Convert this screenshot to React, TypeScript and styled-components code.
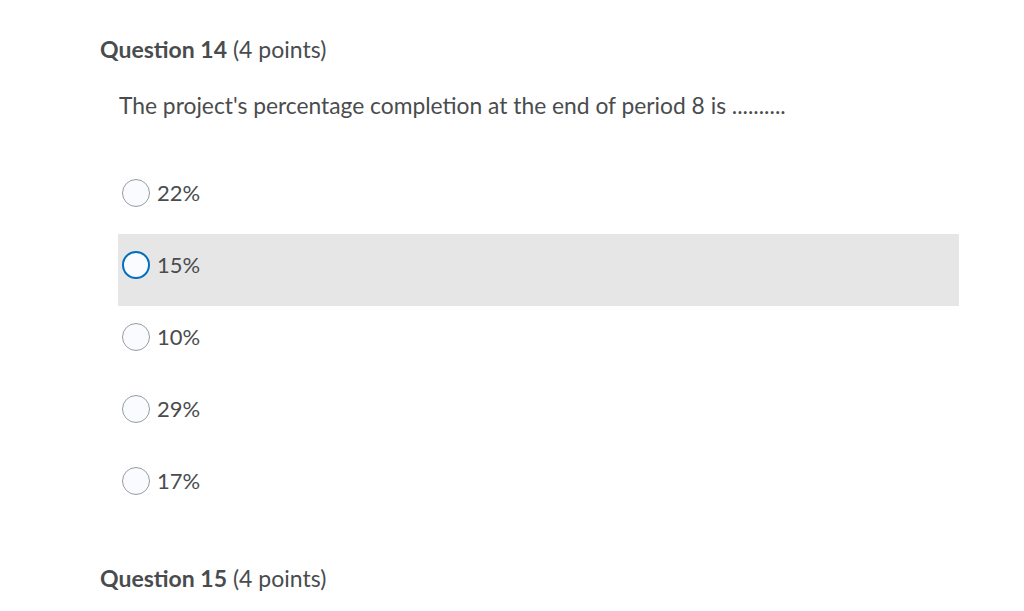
import React from "react";
import styled, { createGlobalStyle } from "styled-components";

const Global = createGlobalStyle`
  html, body { margin: 0; padding: 0; background: #ffffff; }
  body { font-family: Lato, "Open Sans", sans-serif; color: #494c4e; }
`;

const Page = styled.div`
  padding: 34px 0 0 100px;
  width: 1024px;
  height: 611px;
  box-sizing: border-box;
  overflow: hidden;
`;

const Heading = styled.h2`
  margin: 0;
  font-size: 23px;
  line-height: 30px;
  font-weight: 400;
  color: #494c4e;
  b { font-weight: 700; }
`;

const Body = styled.div`
  padding-left: 18px;
  width: 841px;
`;

const Prompt = styled.p`
  margin: 26px 0 0 1px;
  font-size: 22.8px;
  line-height: 30px;
`;

const Options = styled.div`
  display: flex;
  flex-direction: column;
  margin-top: 42px;
  margin-bottom: 41px;
`;

const Row = styled.label<{ $active?: boolean }>`
  display: flex;
  align-items: flex-start;
  gap: 7px;
  height: 72px;
  box-sizing: border-box;
  padding: 17px 0 0 4px;
  background: ${(p) => (p.$active ? "#e6e6e6" : "transparent")};
`;

const Radio = styled.span<{ $active?: boolean }>`
  width: 28px;
  height: 28px;
  box-sizing: border-box;
  border-radius: 50%;
  background: #f9fbff;
  border: ${(p) => (p.$active ? "2px solid #006fbf" : "1px solid #979b9f")};
  flex: none;
`;

const OptionText = styled.span`
  font-size: 22px;
  line-height: 28px;
`;

const options = ["22%", "15%", "10%", "29%", "17%"];

export default function App() {
  return (
    <Page>
      <Global />
      <Heading>
        <b>Question 14</b> (4 points)
      </Heading>
      <Body>
        <Prompt>The project's percentage completion at the end of period 8 is ..........</Prompt>
        <Options>
          {options.map((o, i) => (
            <Row key={o} $active={i === 1}>
              <Radio $active={i === 1} />
              <OptionText>{o}</OptionText>
            </Row>
          ))}
        </Options>
      </Body>
      <Heading>
        <b>Question 15</b> (4 points)
      </Heading>
    </Page>
  );
}
